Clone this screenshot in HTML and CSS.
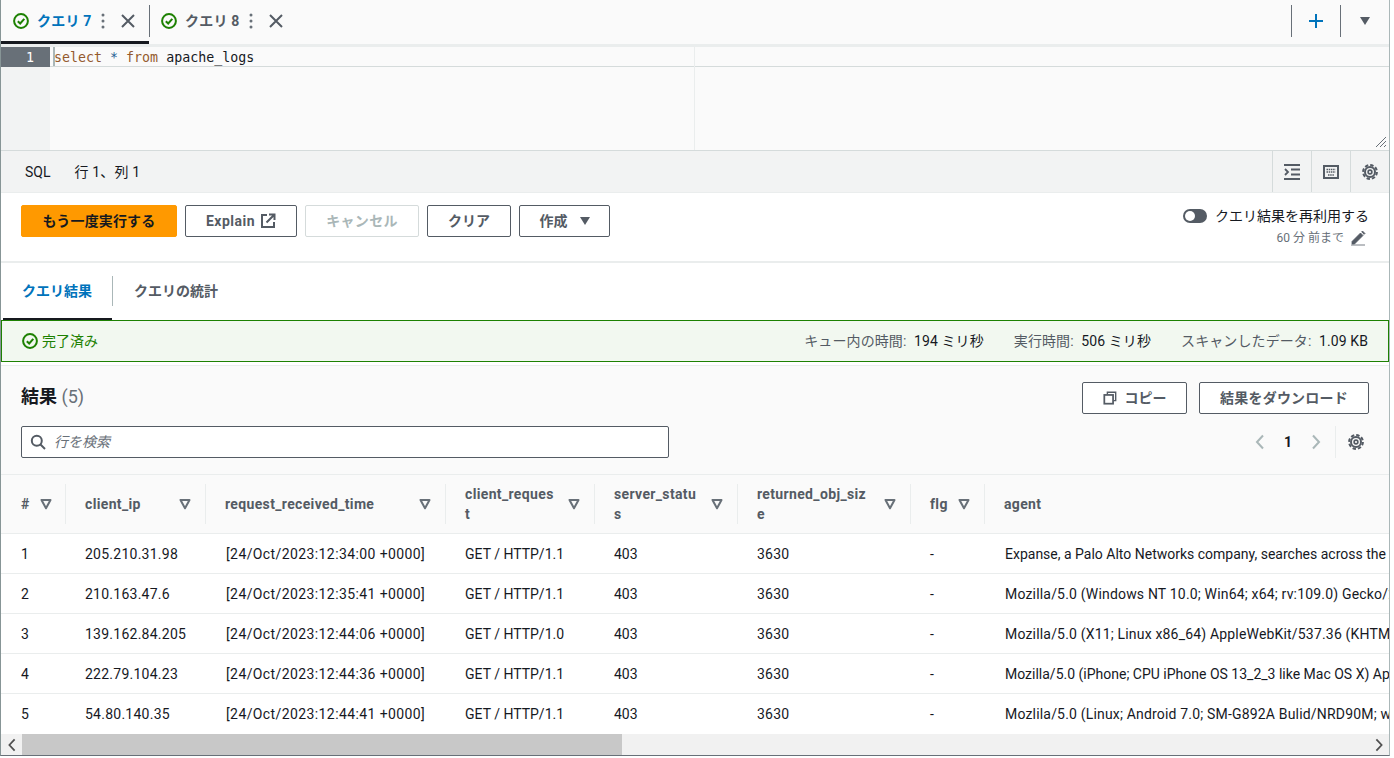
FILE: index.html
```html
<!DOCTYPE html>
<html lang="ja">
<head>
<meta charset="utf-8">
<title>クエリ</title>
<link rel="stylesheet" href="styles.css">
</head>
<body>
<svg class="defs" width="0" height="0" aria-hidden="true">
  <defs>
    <symbol id="i-check" viewBox="0 0 16 16"><circle cx="8" cy="8" r="6.9" fill="none" stroke="currentColor" stroke-width="2"/><path d="M4.8 8.2 7.2 10.5 11.3 5.8" fill="none" stroke="currentColor" stroke-width="2"/></symbol>
    <symbol id="i-x" viewBox="0 0 16 16"><path d="M2 2 14 14M14 2 2 14" fill="none" stroke="currentColor" stroke-width="2"/></symbol>
    <symbol id="i-more" viewBox="0 0 4 16"><circle cx="2" cy="2" r="1.5" fill="currentColor"/><circle cx="2" cy="8" r="1.5" fill="currentColor"/><circle cx="2" cy="14" r="1.5" fill="currentColor"/></symbol>
    <symbol id="i-gear" viewBox="0 0 16 16"><circle cx="8" cy="8" r="6.900" fill="none" stroke="currentColor" stroke-width="2" stroke-dasharray="3.420 2"/><circle cx="8" cy="8" r="5" fill="none" stroke="currentColor" stroke-width="2"/><circle cx="8" cy="8" r="1.900" fill="none" stroke="currentColor" stroke-width="1.600"/></symbol>
    <symbol id="i-chev-l" viewBox="0 0 10 16"><path d="M8 1.500 2 8l6 6.500" fill="none" stroke="currentColor" stroke-width="2"/></symbol>
    <symbol id="i-chev-r" viewBox="0 0 10 16"><path d="M2 1.500 8 8l-6 6.500" fill="none" stroke="currentColor" stroke-width="2"/></symbol>
    <symbol id="i-sort" viewBox="0 0 12 12"><path d="M1.500 2h9L6 10.300z" fill="none" stroke="currentColor" stroke-width="2" stroke-linejoin="round"/></symbol>
  </defs>
</svg>
<main class="frame">
  <header class="qtabs">
    <div class="qtab qtab-active">
      <svg class="ic16 green"><use href="#i-check"/></svg>
      <span class="qtab-name">クエリ 7</span>
      <svg class="more"><use href="#i-more"/></svg>
      <svg class="ic16 slate"><use href="#i-x"/></svg>
    </div>
    <div class="qtab qtab-second">
      <svg class="ic16 green"><use href="#i-check"/></svg>
      <span class="qtab-name">クエリ 8</span>
      <svg class="more"><use href="#i-more"/></svg>
      <svg class="ic16 slate"><use href="#i-x"/></svg>
    </div>
    <div class="qtab-tools">
      <span class="tool">
        <svg class="ic16 blue" viewBox="0 0 16 16"><path d="M8 1v14M1 8h14" fill="none" stroke="currentColor" stroke-width="2"/></svg>
      </span>
      <span class="tool">
        <svg class="caret" viewBox="0 0 12 10"><path d="M1 1h10L6 9z" fill="currentColor"/></svg>
      </span>
    </div>
  </header>

  <section class="editor">
    <div class="gutter"><div class="lineno">1</div></div>
    <div class="code">
      <div class="codeline"><span class="kw">select</span> <span class="op">*</span> <span class="kw">from</span> apache_logs</div>
      <div class="cursor"></div>
      <div class="margin"></div>
      <svg class="grip" viewBox="0 0 12 12"><path d="M1 11 11 1M5 11 11 5M9 11 11 9" fill="none" stroke="#687078" stroke-width="1"/></svg>
    </div>
  </section>

  <section class="statusbar">
    <span class="lang">SQL</span>
    <span class="pos">行 1、列 1</span>
    <div class="status-tools">
      <span class="stool"><svg class="ic16 slate" viewBox="0 0 16 16"><path d="M0 1h16M7 5.500h9M7 10.500h9M0 15h16" fill="none" stroke="currentColor" stroke-width="2"/><path d="M1 5l3 3-3 3" fill="none" stroke="currentColor" stroke-width="1.800"/></svg></span>
      <span class="stool"><svg class="ic16 slate" viewBox="0 0 16 16"><rect x="1" y="2" width="14" height="12" fill="none" stroke="currentColor" stroke-width="2"/><path d="M3.500 5.500h9M3.500 8h9M5 11h6" fill="none" stroke="currentColor" stroke-width="1.600" stroke-dasharray="1.500 .7"/></svg></span>
      <span class="stool"><svg class="ic16 slate"><use href="#i-gear"/></svg></span>
    </div>
  </section>

  <section class="actions">
    <div class="btnrow">
      <button class="btn btn-primary">もう一度実行する</button>
      <button class="btn btn-explain"><span class="explain-label">Explain</span>
        <svg class="ic16" viewBox="0 0 16 16"><path d="M7 2H2v12h12V9" fill="none" stroke="currentColor" stroke-width="2"/><path d="M6.500 9.500 14 2M9 1.500h5.500V7" fill="none" stroke="currentColor" stroke-width="2"/></svg>
      </button>
      <button class="btn btn-disabled">キャンセル</button>
      <button class="btn btn-clear">クリア</button>
      <button class="btn btn-create">作成
        <svg class="caret-sm" viewBox="0 0 12 10"><path d="M1 1h10L6 9z" fill="currentColor"/></svg>
      </button>
    </div>
    <div class="reuse">
      <div class="reuse-top"><span class="toggle"><span class="knob"></span></span><span>クエリ結果を再利用する</span></div>
      <div class="reuse-sub"><span>60 分 前まで</span>
        <svg class="ic16 slate" viewBox="0 0 16 16"><path d="M2 11.500 10.500 3l2.500 2.500L4.500 14H2zM11.500 2l1-1 2.500 2.500-1 1M1 15h14" fill="currentColor" stroke="currentColor" stroke-width=".8"/></svg>
      </div>
    </div>
  </section>

  <nav class="rtabs">
    <span class="rtab rtab-active">クエリ結果</span>
    <span class="rtab rtab-second">クエリの統計</span>
  </nav>

  <section class="success">
    <div class="success-left">
      <svg class="ic16"><use href="#i-check"/></svg>
      <span>完了済み</span>
    </div>
    <div class="stats">
      <span><span class="stat-label">キュー内の時間:</span> 194 ミリ秒</span>
      <span><span class="stat-label">実行時間:</span> 506 ミリ秒</span>
      <span><span class="stat-label">スキャンしたデータ:</span> 1.09 KB</span>
    </div>
  </section>

  <section class="results">
    <div class="results-head">
      <div class="results-left">
        <h2 class="results-title">結果 <span class="count">(5)</span></h2>
        <label class="search">
          <svg class="ic16 slate" viewBox="0 0 16 16"><circle cx="6.800" cy="6.800" r="5" fill="none" stroke="currentColor" stroke-width="2"/><path d="M10.500 10.500 15 15" fill="none" stroke="currentColor" stroke-width="2"/></svg>
          <span class="placeholder">行を検索</span>
        </label>
      </div>
      <div class="results-right">
        <div class="btnrow-right">
          <button class="btn btn-copy">
            <svg class="ic14" viewBox="0 0 16 16"><path d="M5 4V1.500h9.500V11H12" fill="none" stroke="currentColor" stroke-width="1.600"/><rect x="1.500" y="4.500" width="10" height="10" fill="none" stroke="currentColor" stroke-width="2"/></svg>
            コピー
          </button>
          <button class="btn btn-download">結果をダウンロード</button>
        </div>
        <div class="pager">
          <svg class="chev"><use href="#i-chev-l"/></svg>
          <span class="page">1</span>
          <svg class="chev"><use href="#i-chev-r"/></svg>
          <span class="pager-gear"><svg class="ic16 slate"><use href="#i-gear"/></svg></span>
        </div>
      </div>
    </div>
  </section>

  <div class="tablewrap">
    <table class="grid">
      <colgroup>
        <col class="c1"><col class="c2"><col class="c3"><col class="c4"><col class="c5"><col class="c6"><col class="c7"><col class="c8">
      </colgroup>
      <thead>
        <tr>
          <th><div class="th th-first"><span class="thn">#</span><svg class="sort"><use href="#i-sort"/></svg></div></th>
          <th><div class="th sep"><span class="thn">client_ip</span><svg class="sort"><use href="#i-sort"/></svg></div></th>
          <th><div class="th sep"><span class="thn">request_received_time</span><svg class="sort"><use href="#i-sort"/></svg></div></th>
          <th><div class="th sep"><span class="thn thn-wrap">client_request</span><svg class="sort"><use href="#i-sort"/></svg></div></th>
          <th><div class="th sep"><span class="thn thn-wrap">server_status</span><svg class="sort"><use href="#i-sort"/></svg></div></th>
          <th><div class="th sep"><span class="thn thn-wrap">returned_obj_size</span><svg class="sort"><use href="#i-sort"/></svg></div></th>
          <th><div class="th sep"><span class="thn">flg</span><svg class="sort"><use href="#i-sort"/></svg></div></th>
          <th><div class="th sep"><span class="thn">agent</span></div></th>
        </tr>
      </thead>
      <tbody>
        <tr><td>1</td><td class="num">205.210.31.98</td><td class="date">[24/Oct/2023:12:34:00 +0000]</td><td>GET / HTTP/1.1</td><td>403</td><td class="num">3630</td><td>-</td><td class="agent">Expanse, a Palo Alto Networks company, searches across the</td></tr>
        <tr><td>2</td><td class="num">210.163.47.6</td><td class="date">[24/Oct/2023:12:35:41 +0000]</td><td>GET / HTTP/1.1</td><td>403</td><td class="num">3630</td><td>-</td><td class="agent ua">Mozilla/5.0 (Windows NT 10.0; Win64; x64; rv:109.0) Gecko/20100101</td></tr>
        <tr><td>3</td><td class="num">139.162.84.205</td><td class="date">[24/Oct/2023:12:44:06 +0000]</td><td>GET / HTTP/1.0</td><td>403</td><td class="num">3630</td><td>-</td><td class="agent ua">Mozilla/5.0 (X11; Linux x86_64) AppleWebKit/537.36 (KHTML, like Gecko)</td></tr>
        <tr><td>4</td><td class="num">222.79.104.23</td><td class="date">[24/Oct/2023:12:44:36 +0000]</td><td>GET / HTTP/1.1</td><td>403</td><td class="num">3630</td><td>-</td><td class="agent">Mozilla/5.0 (iPhone; CPU iPhone OS 13_2_3 like Mac OS X) AppleWebKit</td></tr>
        <tr><td>5</td><td class="num">54.80.140.35</td><td class="date">[24/Oct/2023:12:44:41 +0000]</td><td>GET / HTTP/1.1</td><td>403</td><td class="num">3630</td><td>-</td><td class="agent ua">Mozlila/5.0 (Linux; Android 7.0; SM-G892A Bulid/NRD90M; wv)</td></tr>
      </tbody>
    </table>
  </div>

  <div class="hscroll">
    <svg class="sb-arrow"><use href="#i-chev-l"/></svg>
    <div class="sb-track"><div class="sb-thumb"></div></div>
    <svg class="sb-arrow"><use href="#i-chev-r"/></svg>
  </div>
</main>
</body>
</html>
```
FILE: styles.css
```css
* { box-sizing: border-box; }
html, body { margin: 0; padding: 0; background: #fff; }
body {
  font-family: Roboto, "Noto Sans CJK JP", sans-serif;
  font-size: 14px;
  line-height: 20px;
  color: #16191f;
  overflow: hidden;
}
.defs { display: block; height: 0; }
.frame {
  width: 1390px;
  height: 756px;
  border-left: 1px solid #879596;
  border-right: 1px solid #aab7b8;
  border-bottom: 1px solid #687078;
  display: flex;
  flex-direction: column;
  overflow: hidden;
}
.ic16 { width: 16px; height: 16px; flex: none; display: block; }
.ic14 { width: 14px; height: 14px; flex: none; display: block; }
.green { color: #1d8102; }
.slate { color: #545b64; }
.blue { color: #0073bb; }

/* query tabs */
.qtabs {
  height: 47px;
  flex: none;
  display: flex;
  align-items: flex-start;
  background: #fafafa;
  border-bottom: 3px solid #eaeded;
}
.qtab {
  height: 44px;
  display: flex;
  align-items: center;
  padding-left: 12px;
  font-weight: 700;
  color: #545b64;
}
.qtab-active {
  width: 148px;
  color: #0073bb;
  border-bottom: 3px solid #16191f;
  padding-top: 1px;
}
.qtab-second {
  position: relative;
  padding-bottom: 3px;
  padding-top: 1px;
}
.qtab-second::before {
  content: "";
  position: absolute;
  left: 0;
  top: 5px;
  height: 32px;
  width: 1px;
  background: #687078;
}
.qtab-name { margin-left: 8px; width: 64px; letter-spacing: .2px; }
.more { width: 4px; height: 16px; margin-right: 15px; color: #687078; flex: none; }
.qtab-tools { margin-left: auto; display: flex; padding-top: 5px; }
.tool {
  width: 49px;
  height: 32px;
  display: flex;
  align-items: center;
  justify-content: center;
  border-left: 1px solid #687078;
}
.caret { width: 12px; height: 10px; color: #545b64; }

/* editor */
.editor {
  height: 104px;
  flex: none;
  display: flex;
  background: #fafafa;
  border-bottom: 1px solid #d5dbdb;
}
.gutter { width: 49px; flex: none; background: #f2f3f3; }
.lineno {
  height: 20px;
  background: #687078;
  color: #fff;
  font-family: "DejaVu Sans Mono", monospace;
  font-size: 13.3px;
  line-height: 21px;
  text-align: right;
  padding-right: 16px;
}
.code { flex: 1; position: relative; }
.codeline {
  height: 20px;
  font-family: "DejaVu Sans Mono", monospace;
  font-size: 13.3px;
  line-height: 21px;
  padding-left: 4px;
  color: #16191f;
  border-bottom: 1px solid #d5dbdb;
  white-space: pre;
}
.kw { color: #945a2e; }
.op { color: #1f5f94; }
.cursor { position: absolute; left: 3px; top: 0; width: 2px; height: 19px; background: #aab7b8; }
.margin { position: absolute; left: 644px; top: 0; bottom: 0; width: 1px; background: #eaeded; }
.grip { position: absolute; right: 2px; bottom: 2px; width: 12px; height: 12px; }

/* status */
.statusbar {
  height: 42px;
  flex: none;
  display: flex;
  align-items: center;
  background: #f2f3f3;
  padding-left: 24px;
  border-bottom: 1px solid #eaeded;
}
.lang { margin-right: 24px; }
.pos { letter-spacing: .15px; }
.status-tools { margin-left: auto; display: flex; height: 100%; }
.stool {
  width: 39px;
  display: flex;
  align-items: center;
  justify-content: center;
  border-left: 1px solid #d5dbdb;
}

/* actions */
.actions {
  height: 70px;
  flex: none;
  display: flex;
  justify-content: space-between;
  padding: 12px 20px 0;
  border-bottom: 2px solid #eaeded;
  background: #fff;
}
.btnrow { display: flex; gap: 8px; align-items: flex-start; }
.btn {
  font: inherit;
  font-weight: 700;
  height: 32px;
  border: 1px solid #545b64;
  border-radius: 2px;
  background: #fff;
  color: #545b64;
  padding: 0;
  display: inline-flex;
  align-items: center;
  justify-content: center;
  gap: 6px;
  flex: none;
}
.btn-primary { width: 156px; background: #ff9900; border-color: #ff9900; color: #16191f; letter-spacing: .15px; }
.btn-explain { width: 112px; gap: 5px; }
.explain-label { letter-spacing: .5px; }
.btn-disabled { width: 114px; background: #fff; border-color: #d5dbdb; color: #aab7b8; letter-spacing: .3px; }
.btn-clear { width: 84px; }
.btn-create { width: 91px; gap: 11px; padding-left: 1px; }
.caret-sm { width: 12px; height: 10px; }
.btn-copy { width: 105px; gap: 8px; }
.btn-download { width: 170px; letter-spacing: .2px; }

.reuse { display: flex; flex-direction: column; align-items: flex-end; }
.reuse-top { display: flex; align-items: center; gap: 8px; height: 20px; margin-top: 1px; }
.toggle { width: 24px; height: 14px; border-radius: 7px; background: #545b64; display: block; position: relative; }
.knob { position: absolute; left: 2px; top: 2px; width: 10px; height: 10px; border-radius: 50%; background: #fff; }
.reuse-sub { display: flex; align-items: center; gap: 6px; font-size: 12px; color: #687078; margin-top: 2px; padding-right: 3px; }

/* result tabs */
.rtabs {
  height: 57px;
  flex: none;
  display: flex;
  align-items: flex-start;
  background: #fff;
}
.rtab { font-weight: 700; color: #545b64; height: 57px; display: flex; align-items: center; padding-bottom: 1px; }
.rtab-active {
  width: 109px;
  margin-left: 2px;
  padding-left: 19px;
  color: #0073bb;
  border-bottom: 2px solid #16191f;
  padding-bottom: 0;
}
.rtab-second { position: relative; padding-left: 22px; }
.rtab-second::before {
  content: "";
  position: absolute;
  left: 0;
  top: 13px;
  height: 30px;
  width: 1px;
  background: #aab7b8;
}

/* success */
.success {
  height: 42px;
  flex: none;
  display: flex;
  align-items: center;
  justify-content: space-between;
  background: #f2f8f0;
  border: 1px solid #1d8102;
  padding: 0 20px 0 20px;
}
.success-left { display: flex; align-items: center; gap: 4px; color: #1d8102; }
.stats { display: flex; gap: 30px; letter-spacing: .1px; }
.stat-label { color: #545b64; margin-right: 4px; }

/* results */
.results {
  height: 110px;
  flex: none;
  background: #fafafa;
  margin-top: 3px;
  border-top: 1px solid #eaeded;
  border-bottom: 1px solid #eaeded;
  padding: 16px 20px 0;
}
.results-head { display: flex; justify-content: space-between; }
.results-left { width: 648px; }
.results-title { margin: 0; font-size: 18px; line-height: 30px; font-weight: 700; }
.count { font-weight: 400; color: #687078; }
.search {
  margin-top: 14px;
  height: 32px;
  display: flex;
  align-items: center;
  gap: 8px;
  background: #fff;
  border: 1px solid #545b64;
  border-radius: 2px;
  padding-left: 8px;
}
.placeholder { font-style: italic; color: #687078; }
.results-right { display: flex; flex-direction: column; align-items: flex-end; }
.btnrow-right { display: flex; gap: 12px; }
.pager { display: flex; align-items: center; height: 32px; margin-top: 12px; padding-right: 5px; }
.chev { width: 12px; height: 16px; color: #aab7b8; flex: none; }
.page { width: 44px; text-align: center; font-weight: 700; }
.pager-gear {
  margin-left: 13px;
  height: 32px;
  width: 29px;
  display: flex;
  align-items: center;
  justify-content: flex-end;
  border-left: 1px solid #eaeded;
}

/* table */
.tablewrap { flex: 1; overflow: hidden; background: #fff; }
.grid { table-layout: fixed; border-collapse: collapse; width: 1700px; }
.c1 { width: 64px; }
.c2 { width: 140px; }
.c3 { width: 240px; }
.c4 { width: 149px; }
.c5 { width: 143px; }
.c6 { width: 173px; }
.c7 { width: 74px; }
.c8 { width: 717px; }
.grid th {
  padding: 1px 0 0;
  height: 58px;
  background: #fafafa;
  border-bottom: 1px solid #eaeded;
  text-align: left;
  font-weight: 700;
  color: #545b64;
  vertical-align: middle;
  letter-spacing: .35px;
}
.th { display: flex; align-items: center; height: 40px; padding: 0 14px 0 20px; justify-content: space-between; }
.th-first { padding-right: 13px; }
.sep { border-left: 1px solid #eaeded; padding-left: 19px; }
.thn { word-break: break-all; flex: none; }
.thn-wrap { flex: 0 1 auto; padding-right: 12px; }
.sort { width: 12px; height: 12px; flex: none; color: #687078; }
.grid td {
  padding: 2px 0 0 20px;
  height: 40px;
  white-space: nowrap;
  overflow: hidden;
  border-bottom: 1px solid #eaeded;
  color: #16191f;
}
.grid tbody tr:last-child td { border-bottom: 0; }
.grid td.num { letter-spacing: .25px; }
.grid td.date { letter-spacing: .4px; padding-left: 21px; }
.grid td.agent { padding-left: 21px; }
.grid td.ua { letter-spacing: .18px; }

/* scrollbar */
.hscroll { height: 21px; flex: none; display: flex; align-items: center; background: #f1f1f1; }
.sb-arrow { width: 10px; height: 14px; margin: 0 5.5px; color: #505050; flex: none; }
.sb-track { flex: 1; height: 100%; }
.sb-thumb { width: 600px; height: 100%; background: #c8c8c8; }
```
